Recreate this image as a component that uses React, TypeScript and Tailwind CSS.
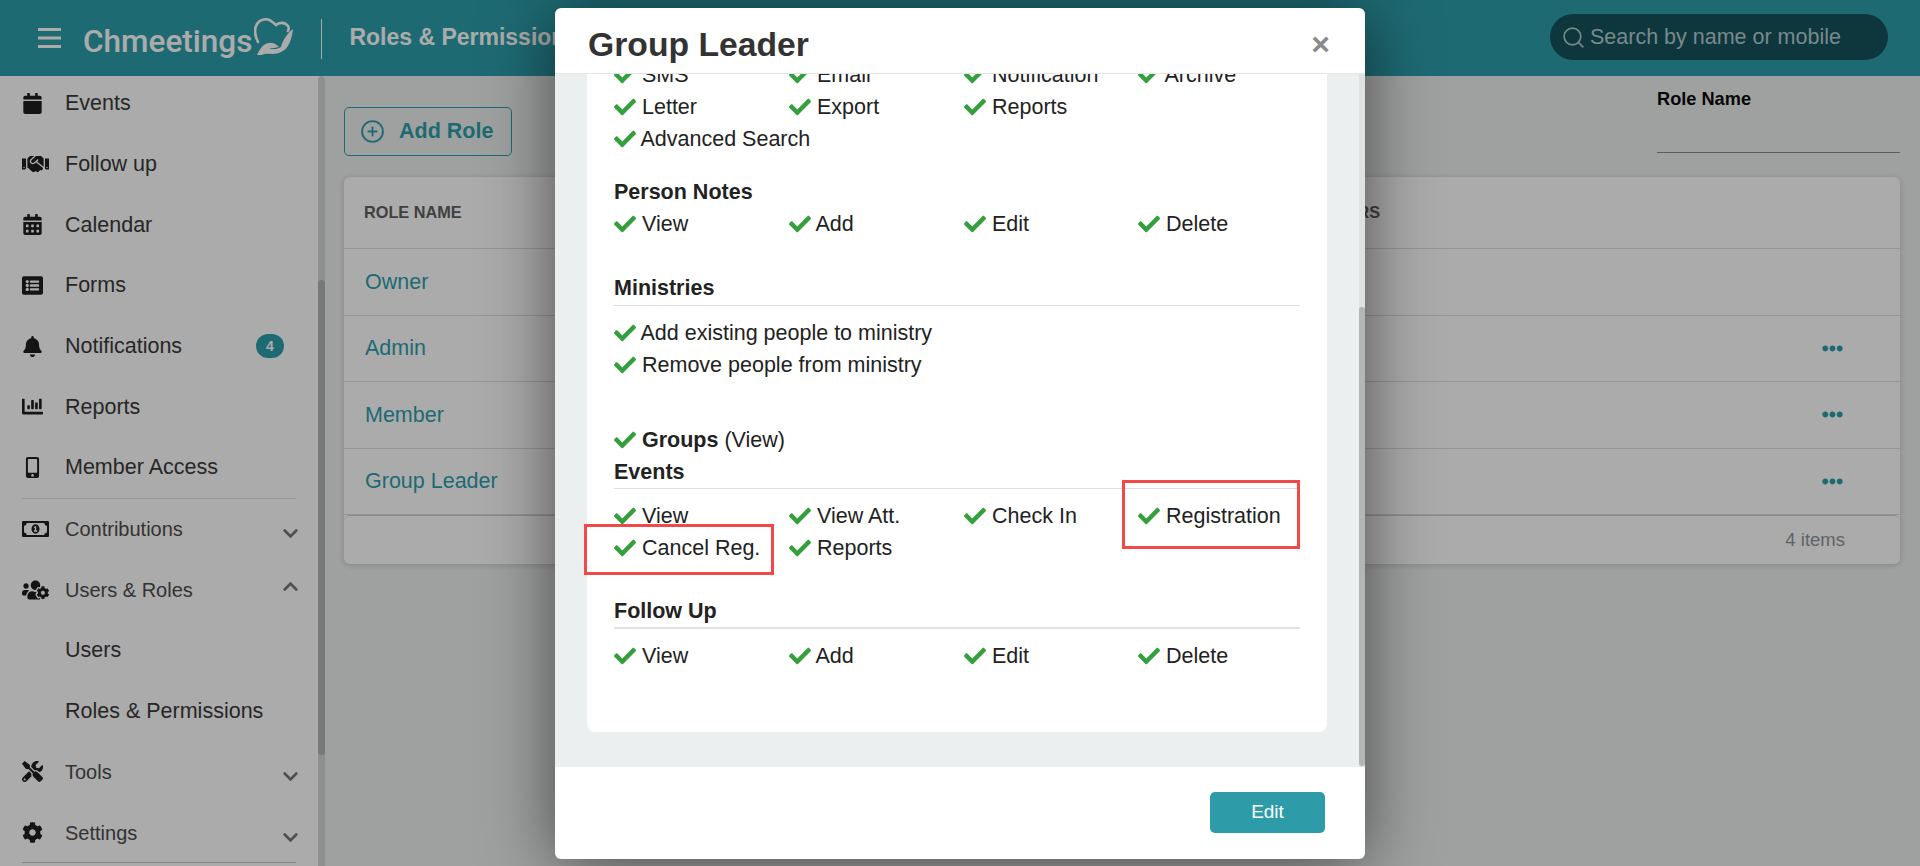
import React from 'react'
import {
  FaBell, FaCalendar, FaCalendarAlt, FaChartBar, FaCheck, FaChevronDown, FaChevronUp, FaCog,
  FaEllipsisH, FaHandshake, FaListAlt, FaMobileAlt, FaRegMoneyBillAlt, FaTools, FaUsersCog,
} from 'react-icons/fa'
import { CirclePlus, Search } from 'lucide-react'

function Perm({ label, children }: { label: React.ReactNode; children?: React.ReactNode }) {
  // labels starting with A sit a bit closer to the tick
  const tight = typeof label === 'string' && label[0] === 'A'
  return (
    <div className="relative flex items-center h-8">
      <FaCheck className="text-[#359f3d] shrink-0" size={22} />
      <span className={tight ? 'ml-[4.5px] whitespace-nowrap' : 'ml-[6px] whitespace-nowrap'}>{label}</span>
      {children}
    </div>
  )
}

function PermRow({ items }: { items: string[] }) {
  return (
    <div className="grid grid-cols-[175px_175px_174px_162px]">
      {items.map((i) => (
        <Perm key={i} label={i} />
      ))}
    </div>
  )
}

function SideRow({ icon, label, small, right }: { icon?: React.ReactNode; label: string; small?: boolean; right?: React.ReactNode }) {
  return (
    <div className="flex items-center h-[60.7px] pl-[22px] shrink-0">
      <div className="w-[43px] shrink-0 text-[#1f1f1f]">{icon}</div>
      <span className={small ? 'text-[20px] text-[#4c4c4c]' : 'text-[21.5px] text-[#3a3a3a]'}>{label}</span>
      <div className="ml-auto">{right}</div>
    </div>
  )
}

const chevron = <FaChevronDown className="text-[#777] mr-[19px] mt-[9px]" size={17} />

function Logo() {
  return (
    <svg width="39" height="38" viewBox="0 0 39 38" className="ml-[2px] mt-[-3px]">
      <path d="M4 24C1 18 0 11 3 6C6 1 13 0 17 3C19 4.5 21 6 22 7C25 4 31 4 34 8C35 9.500 35 11 34 13" fill="none" stroke="#ffffff" strokeWidth="2.6" strokeLinecap="round" />
      <path d="M3 37C6 30 10 25 15 25C20 24 24 28 25 29C22 30 18 30 15 30C19 32 24 31 27 29C28 24 33 15 39 11C38 20 35 31 27 34C20 38 13 34 8 37Z" fill="#ffffff" />
    </svg>
  )
}

function App() {
  return (
    <div className="relative flex flex-col w-screen h-screen overflow-hidden bg-[#eef0ef] font-['Liberation_Sans',Arial,sans-serif]">
      {/* Top bar */}
      <header className="flex items-center h-[76px] shrink-0 bg-[#2e9fac]">
        <svg width="23" height="20" viewBox="0 0 23 20" className="ml-[38px] mb-[1px] shrink-0">
          <rect width="23" height="3" fill="#ffffff" />
          <rect y="8.500" width="23" height="3" fill="#ffffff" />
          <rect y="17" width="23" height="3" fill="#ffffff" />
        </svg>
        <span className="ml-[22px] font-['Roboto',sans-serif] font-medium text-[31.5px] text-white mt-[8px]">Chmeetings</span>
        <Logo />
        <div className="ml-[28px] w-px h-[40px] bg-white mb-[-2px]" />
        <span className="ml-[27px] text-[23px] font-bold text-white mb-[1px]">Roles &amp; Permissions</span>
        <div className="ml-auto mr-[32px] mb-[2px] flex items-center w-[338px] h-[46px] rounded-full bg-[#15515b] pl-[11px]">
          <Search size={25} strokeWidth={1.6} className="text-[#b2cdd2]" />
          <span className="ml-[4px] text-[21.5px] text-[#b2cdd2]">Search by name or mobile</span>
        </div>
      </header>

      <div className="flex flex-1 min-h-0">
        {/* Sidebar */}
        <aside className="relative flex w-[325px] shrink-0 bg-white">
          <nav className="flex flex-col w-[318px] overflow-hidden">
            <div className="-mt-[3px] flex flex-col">
              <SideRow label="Events" icon={<FaCalendar className="h-[21px] w-auto" />} />
              <SideRow label="Follow up" icon={<FaHandshake className="w-[27px] h-[22px]" />} />
              <SideRow label="Calendar" icon={<FaCalendarAlt className="h-[21px] w-auto" />} />
              <SideRow label="Forms" icon={<FaListAlt className="h-[21px] w-auto" />} />
              <SideRow
                label="Notifications"
                icon={<FaBell className="h-[21px] w-auto" />}
                right={<div className="flex items-center justify-center w-[28px] h-[24px] mr-[34px] rounded-full bg-[#2e9fac] text-white text-[14px] font-bold">4</div>}
              />
              <SideRow label="Reports" icon={<FaChartBar className="h-[21px] w-auto" />} />
              <SideRow label="Member Access" icon={<FaMobileAlt className="h-[21px] w-auto" />} />
              <div className="mx-[22px] w-[274px] border-t border-[#dddddd]" />
              <SideRow small label="Contributions" icon={<FaRegMoneyBillAlt className="w-[27px] h-[22px]" />} right={chevron} />
              <SideRow small label="Users & Roles" icon={<FaUsersCog className="w-[27px] h-[22px]" />} right={<FaChevronUp className="text-[#777] mr-[19px] mb-[6px]" size={17} />} />
              <SideRow label="Users" />
              <SideRow label="Roles & Permissions" />
              <SideRow small label="Tools" icon={<FaTools className="h-[21px] w-auto" />} right={chevron} />
              <SideRow small label="Settings" icon={<FaCog className="h-[21px] w-auto" />} right={chevron} />
              <div className="mx-[22px] w-[274px] mt-[-1px] border-t border-[#cccccc]" />
            </div>
          </nav>
          <div className="w-[7px] h-full bg-[#d6d6d6] rounded-t-full">
            <div className="mt-[204px] h-[475px] bg-[#b4b4b4] rounded-full" />
          </div>
        </aside>

        {/* Roles table */}
        <main className="flex-1 min-w-0 pl-[19px] pr-[20px]">
          <div className="flex justify-between h-[101px]">
            <button className="flex items-center mt-[31px] w-[168px] h-[49px] pl-[15px] border border-[#2e9fac] rounded-[5px] text-[21.5px] font-bold text-[#2e9fac]">
              <CirclePlus size={25} strokeWidth={1.8} />
              <span className="ml-[14px]">Add Role</span>
            </button>
            <div className="w-[243px] mt-[13px]">
              <div className="text-[18.2px] font-bold leading-5 text-[#0a0a0a]">Role Name</div>
              <div className="h-[44px] border-b border-[#8a8a8a]" />
            </div>
          </div>
          <div className="bg-white rounded-[6px] shadow-[0_1px_6px_rgba(0,0,0,0.18)]">
            <div className="flex items-center h-[72px] pl-[20px] border-b border-[#dddddd] text-[16.3px] font-bold text-[#606060]">
              <div className="w-[960px]">ROLE NAME</div>
              <div>USERS</div>
            </div>
            {['Owner', 'Admin', 'Member', 'Group Leader'].map((r) => (
              <div key={r} className="flex items-center justify-between h-[66.5px] pl-[21px] pr-[57px] border-b border-[#dddddd] text-[21.5px] text-[#2e9fac]">
                <span>{r}</span>
                {r !== 'Owner' && <FaEllipsisH size={21} />}
              </div>
            ))}
            <div className="flex items-center justify-end h-[49px] pr-[55px] rounded-[6px] border-t border-[#d0d0d0] text-[18.5px] text-[#8f9499]">4 items</div>
          </div>
        </main>
      </div>

      {/* Dialog */}
      <div className="absolute inset-0 flex justify-center bg-black/33">
        <div className="flex flex-col w-[810px] h-[851px] mt-2 bg-white rounded-[6px] overflow-hidden shadow-[0_5px_70px_rgba(0,0,0,0.55)]">
          <div className="flex items-center justify-between h-[66px] shrink-0 pl-[33px] pr-[35px] border-b border-[#e5e5e5]">
            <h2 className="text-[33.7px] font-bold text-[#333333] mt-[7px]">Group Leader</h2>
            <span className="text-[32px] font-bold leading-none text-[#8a8a8a] mt-[7px]">×</span>
          </div>
          <div className="flex flex-1 min-h-0 bg-[#ebefef] overflow-hidden">
            <div className="flex-1 min-w-0 pl-[32px] pr-[32px]">
              <div className="bg-white rounded-b-[8px] pl-[27px] pr-[27px] pb-[60px] text-[21.5px] text-[#222222]">
                <div className="-mt-[15px]">
                  <PermRow items={['SMS', 'Email', 'Notification', 'Archive']} />
                  <PermRow items={['Letter', 'Export', 'Reports']} />
                  <Perm label="Advanced Search" />
                  <div className="mt-[21px] h-8 leading-8 font-bold">Person Notes</div>
                  <PermRow items={['View', 'Add', 'Edit', 'Delete']} />
                  <div className="mt-[32px] h-[34px] leading-8 font-bold border-b border-[#dddddd]">Ministries</div>
                  <div className="mt-[11px]">
                    <Perm label="Add existing people to ministry" />
                    <Perm label="Remove people from ministry" />
                  </div>
                  <div className="mt-[43px]">
                    <Perm label={<><b>Groups</b> (View)</>} />
                  </div>
                  <div className="h-[33px] leading-8 font-bold border-b border-[#dddddd]">Events</div>
                  <div className="mt-[11px] grid grid-cols-[175px_175px_174px_162px]">
                    <Perm label="View" />
                    <Perm label="View Att." />
                    <Perm label="Check In" />
                    <Perm label="Registration">
                      <div className="absolute -left-[16px] -top-[20px] w-[178px] h-[69px] border-[3px] border-[#f44848]" />
                    </Perm>
                    <Perm label="Cancel Reg.">
                      <div className="absolute -left-[30px] -top-[8px] w-[190px] h-[51px] border-[3px] border-[#f44848]" />
                    </Perm>
                    <Perm label="Reports" />
                  </div>
                  <div className="mt-[31px] h-[34px] leading-8 font-bold border-b-2 border-[#e2e2e2]">Follow Up</div>
                  <div className="mt-[11px]">
                    <PermRow items={['View', 'Add', 'Edit', 'Delete']} />
                  </div>
                </div>
              </div>
            </div>
            <div className="w-[6px] shrink-0 bg-[#dfe2e2]">
              <div className="mt-[233px] h-[459px] bg-[#b3b6b6] rounded-full" />
            </div>
          </div>
          <div className="flex items-center justify-end h-[92px] shrink-0 pr-[40px]">
            <button className="w-[115px] h-[41px] mb-[2px] bg-[#2d9ca8] rounded-[5px] text-[19px] text-white">Edit</button>
          </div>
        </div>
      </div>
    </div>
  )
}

export default App
